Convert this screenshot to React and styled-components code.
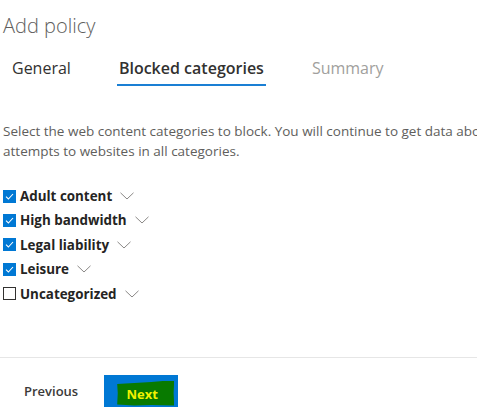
import React from 'react';
import styled, { createGlobalStyle } from 'styled-components';

const GlobalStyle = createGlobalStyle`
  html, body {
    margin: 0;
    padding: 0;
    background: #ffffff;
    overflow: hidden;
  }
  body {
    font-family: "Open Sans", "Noto Sans", "Liberation Sans", sans-serif;
    color: #323130;
  }
`;

const Page = styled.div`
  width: 477px;
  height: 417px;
  display: flex;
  flex-direction: column;
  overflow: hidden;
`;

const Title = styled.h1`
  margin: 12px 0 0 3px;
  font-size: 20px;
  font-weight: 300;
  line-height: 28px;
  color: #605e5c;
`;

const TabBar = styled.div`
  display: flex;
  gap: 48px;
  margin: 17px 0 0 12px;
`;

const Tab = styled.div`
  position: relative;
  padding: 0 2px 7px;
  margin: 0 -2px;
  font-size: 16px;
  line-height: 22px;
  font-weight: ${p => (p.$active ? 600 : 400)};
  color: ${p => (p.$active ? '#323130' : p.$muted ? '#a19f9d' : '#323130')};
  white-space: nowrap;

  &::after {
    content: '';
    display: ${p => (p.$active ? 'block' : 'none')};
    position: absolute;
    left: 0;
    right: 0;
    bottom: 0;
    height: 2px;
    background: #1a7fd4;
  }
`;

const Description = styled.p`
  width: 520px;
  margin: 35px 0 0 3px;
  font-size: 13.5px;
  line-height: 20px;
  color: #605e5c;
`;

const CheckList = styled.div`
  display: flex;
  flex-direction: column;
  gap: 4.4px;
  margin: 25px 0 0 3px;
`;

const Row = styled.label`
  display: flex;
  align-items: center;
  height: 20px;
  font-size: 13.4px;
  font-weight: 700;
  color: #252423;
`;

const Box = styled.span`
  width: 13px;
  height: 13px;
  box-sizing: border-box;
  margin-right: 4px;
  display: flex;
  align-items: center;
  justify-content: center;
  background: ${p => (p.$checked ? '#0078d4' : '#ffffff')};
  border: 1px solid ${p => (p.$checked ? '#0078d4' : '#323130')};
`;

const Chevron = styled.svg`
  margin-left: 8px;
  width: 14px;
  height: 8px;
`;

const Footer = styled.div`
  margin-top: auto;
  border-top: 1px solid #e6e6e6;
  height: 59px;
  display: flex;
  align-items: center;
  padding-left: 24px;
`;

const TextButton = styled.button`
  border: none;
  background: none;
  padding: 0;
  font-family: inherit;
  font-size: 13px;
  font-weight: 600;
  color: #3b3a39;
  margin-top: 6px;
`;

const PrimaryButton = styled.button`
  margin-left: 26px;
  margin-top: 6px;
  width: 74px;
  height: 32px;
  border: none;
  background: #0078d4;
  display: flex;
  align-items: flex-start;
  justify-content: flex-start;
  padding: 0;
  font-family: inherit;
`;

const Highlight = styled.span`
  display: inline-flex;
  align-items: center;
  justify-content: center;
  box-sizing: border-box;
  width: 57px;
  height: 25px;
  margin: 6px 0 0 13px;
  padding: 2px 7px 0 0;
  background: #087a00;
  clip-path: polygon(0 14%, 30% 10%, 60% 6%, 80% 2%, 100% 0, 99% 50%, 100% 100%, 60% 98%, 30% 100%, 0 96%, 1% 50%);
  color: #f2f200;
  font-size: 13px;
  font-weight: 700;
`;

const categories = [
  { name: 'Adult content', checked: true },
  { name: 'High bandwidth', checked: true },
  { name: 'Legal liability', checked: true },
  { name: 'Leisure', checked: true },
  { name: 'Uncategorized', checked: false },
];

export default function App() {
  return (
    <Page>
      <GlobalStyle />
      <Title>Add policy</Title>
      <TabBar>
        <Tab>General</Tab>
        <Tab $active>Blocked categories</Tab>
        <Tab $muted>Summary</Tab>
      </TabBar>
      <Description>
        Select the web content categories to block. You will continue to get data about
        attempts to websites in all categories.
      </Description>
      <CheckList>
        {categories.map(c => (
          <Row key={c.name}>
            <Box $checked={c.checked}>
              {c.checked && (
                <svg width="9" height="7" viewBox="0 0 9 7">
                  <path d="M1 3.6 L3.4 6 L8 1" fill="none" stroke="#fff" strokeWidth="1.1" />
                </svg>
              )}
            </Box>
            {c.name}
            <Chevron viewBox="0 0 14 8">
              <path d="M0.5 0.8 L7 7 L13.5 0.8" fill="none" stroke="#8a8886" strokeWidth="1" />
            </Chevron>
          </Row>
        ))}
      </CheckList>
      <Footer>
        <TextButton>Previous</TextButton>
        <PrimaryButton>
          <Highlight>Next</Highlight>
        </PrimaryButton>
      </Footer>
    </Page>
  );
}
